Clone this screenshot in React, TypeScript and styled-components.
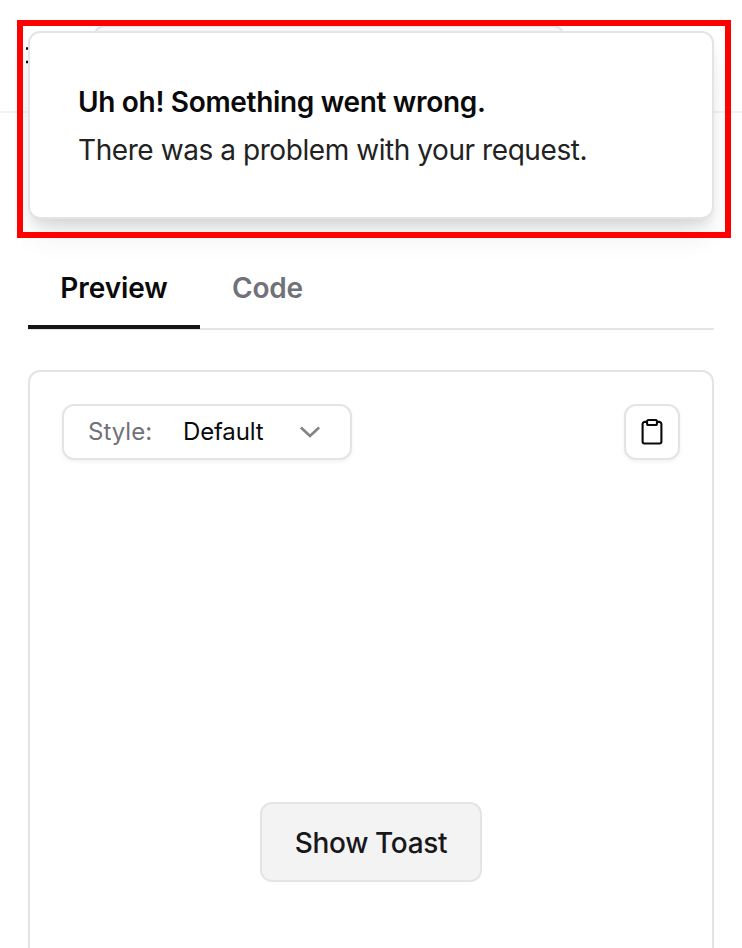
import React from "react";
import styled, { createGlobalStyle } from "styled-components";

const GlobalStyle = createGlobalStyle`
  *, *::before, *::after { box-sizing: border-box; }
  body { margin: 0; background: #fff; overflow: hidden; }
  button { font: inherit; margin: 0; padding: 0; }
`;

const Page = styled.div`
  position: relative;
  height: 948px;
  overflow: hidden;
  background: #fff;
  color: #0a0a0b;
  font-family: Inter, "Liberation Sans", sans-serif;
  font-size: 28px;
  -webkit-font-smoothing: antialiased;
`;

const Header = styled.header`
  display: flex;
  align-items: center;
  height: 113px;
  padding: 0 28px 0 26px;
  border-bottom: 2px solid #f3f3f3;
`;

const MenuIcon = styled.svg`
  width: 28px;
  height: 28px;
  flex: none;
`;

const SearchField = styled.div`
  width: 472px;
  height: 64px;
  margin: 3px 0 0 39px;
  border: 2px solid #e4e4e5;
  border-radius: 12px;
  background: #f7f7f7;
`;

const Content = styled.main`
  display: flex;
  flex-direction: column;
  padding: 135px 28px 0;
`;

const TabList = styled.div`
  display: flex;
  height: 82px;
  border-bottom: 2px solid #e4e4e5;
`;

const Tab = styled.button<{ $active?: boolean }>`
  height: 81px;
  width: ${(p) => (p.$active ? 172 : 135)}px;
  padding-top: 2px;
  border: 0;
  border-bottom: 4px solid ${(p) => (p.$active ? "#151517" : "transparent")};
  background: none;
  color: ${(p) => (p.$active ? "#0a0a0b" : "#71717a")};
  font-weight: 600;
  line-height: 40px;
  letter-spacing: ${(p) => (p.$active ? "-0.1px" : "-0.2px")};
`;

const PreviewCard = styled.section`
  height: 620px;
  margin-top: 40px;
  padding: 32px;
  border: 2px solid #e4e4e5;
  border-radius: 12px;
  display: flex;
  flex-direction: column;
`;

const Toolbar = styled.div`
  display: flex;
  justify-content: space-between;
`;

const StyleSelect = styled.button`
  display: flex;
  align-items: center;
  width: 290px;
  height: 56px;
  padding-left: 24px;
  border: 2px solid #e4e4e5;
  border-radius: 12px;
  background: #fff;
  box-shadow: 0 2px 4px rgba(0, 0, 0, 0.05);
  color: #0a0a0b;
  font-size: 24px;
  line-height: 32px;
`;

const SelectLabel = styled.span`
  width: 95px;
  text-align: left;
  color: #71717a;
`;

const SelectValue = styled.span`
  width: 117px;
  text-align: left;
  letter-spacing: -0.15px;
`;

const Chevron = styled.svg`
  width: 20px;
  height: 12px;
`;

const CopyButton = styled.button`
  display: grid;
  place-items: center;
  width: 56px;
  height: 56px;
  border: 2px solid #e4e4e5;
  border-radius: 12px;
  background: #fff;
  box-shadow: 0 2px 4px rgba(0, 0, 0, 0.05);
  color: #0a0a0b;
`;

const Stage = styled.div`
  display: flex;
  justify-content: center;
  padding-top: 342px;
`;

const ShowToastButton = styled.button`
  width: 222px;
  height: 80px;
  padding-top: 1px;
  border: 2px solid #e4e4e5;
  border-radius: 12px;
  background: #f3f3f3;
  color: #18181b;
  font-weight: 500;
  line-height: 40px;
  letter-spacing: -0.35px;
`;

const Toast = styled.div`
  position: absolute;
  top: 31px;
  left: 28px;
  width: 686px;
  height: 188px;
  padding: 49px 48px 47px;
  border: 2px solid #e4e4e5;
  border-radius: 12px;
  background: #fff;
  box-shadow: 0 20px 30px -6px rgba(0, 0, 0, 0.1), 0 8px 12px -4px rgba(0, 0, 0, 0.1);
`;

const ToastTitle = styled.div`
  font-weight: 600;
  line-height: 40px;
  letter-spacing: -0.32px;
  white-space: nowrap;
`;

const ToastText = styled.div`
  margin-top: 8px;
  line-height: 40px;
  letter-spacing: -0.43px;
  color: #222223;
  white-space: nowrap;
`;

const Highlight = styled.div`
  position: absolute;
  top: 20px;
  left: 17px;
  width: 714px;
  height: 218px;
  border: 6px solid #f00;
  pointer-events: none;
`;

export default function App() {
  return (
    <>
      <GlobalStyle />
      <Page>
        <Header>
          <MenuIcon viewBox="0 0 28 28">
            <path d="M0 6.5H20M0 20H20" stroke="#0a0a0b" strokeWidth="2.6" />
          </MenuIcon>
          <SearchField />
        </Header>
        <Content>
          <TabList>
            <Tab $active>Preview</Tab>
            <Tab>Code</Tab>
          </TabList>
          <PreviewCard>
            <Toolbar>
              <StyleSelect>
                <SelectLabel>Style:</SelectLabel>
                <SelectValue>Default</SelectValue>
                <Chevron viewBox="0 0 20 12" fill="none">
                  <path d="M0.9 1.6L10 10L19.1 1.6" stroke="#848485" strokeWidth="2.7" />
                </Chevron>
              </StyleSelect>
              <CopyButton aria-label="Copy">
                <svg width="28" height="28" viewBox="0 0 28 28" fill="none" stroke="currentColor" strokeWidth="2.1">
                  <path d="M9 3.9H7a2.4 2.4 0 0 0-2.4 2.4v17.3a1.9 1.9 0 0 0 1.9 1.9h15a1.9 1.9 0 0 0 1.9-1.9v-17.3A2.4 2.4 0 0 0 21 3.9H19" />
                  <rect x="9" y="2" width="10" height="5" rx="1.5" />
                </svg>
              </CopyButton>
            </Toolbar>
            <Stage>
              <ShowToastButton>Show Toast</ShowToastButton>
            </Stage>
          </PreviewCard>
        </Content>
        <Toast role="status">
          <ToastTitle>Uh oh! Something went wrong.</ToastTitle>
          <ToastText>There was a problem with your request.</ToastText>
        </Toast>
        <Highlight />
      </Page>
    </>
  );
}
